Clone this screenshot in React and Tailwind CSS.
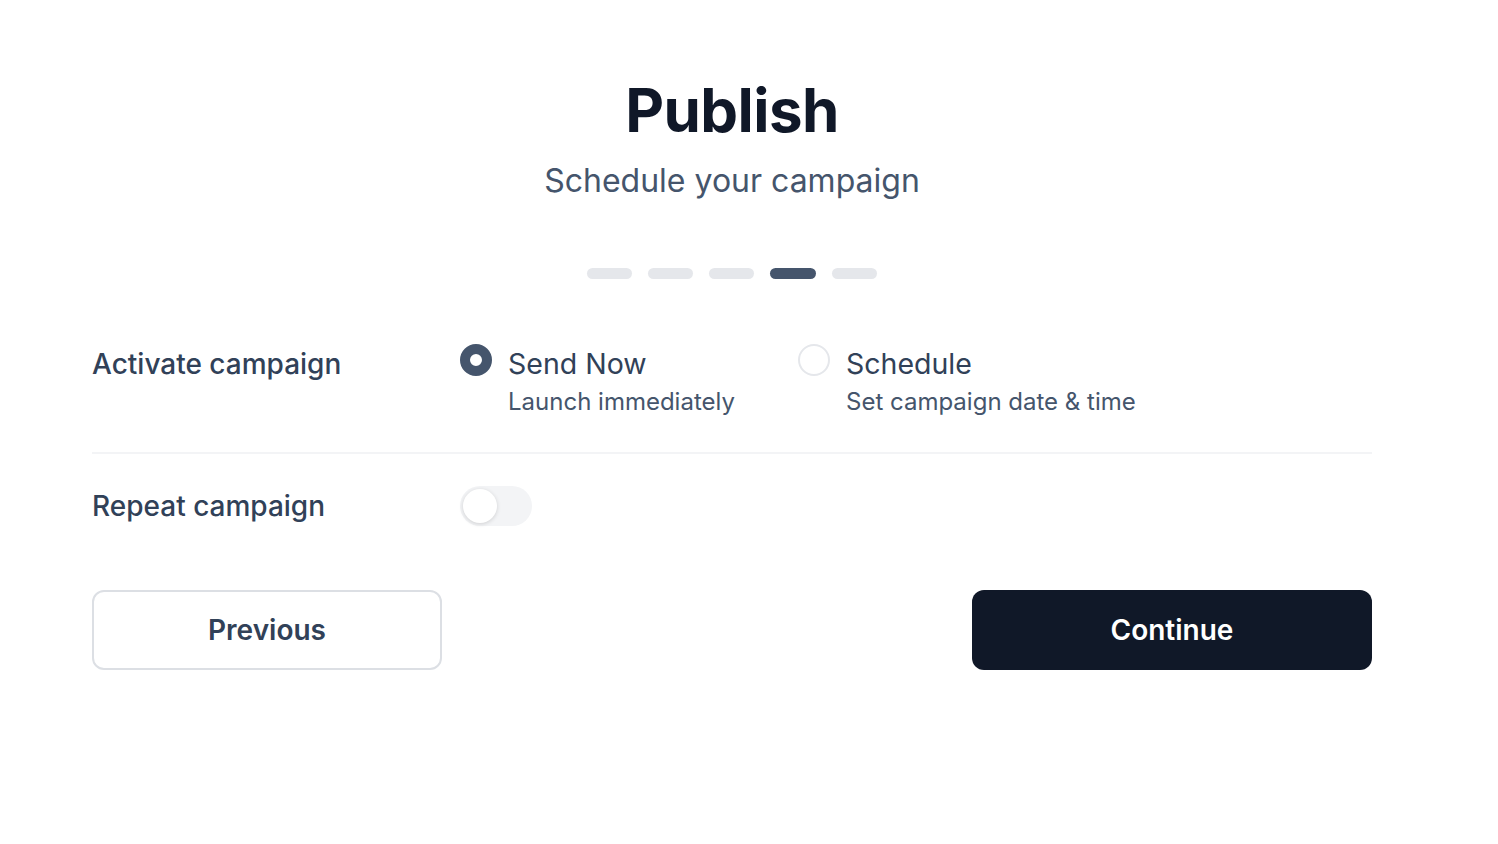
import { useState } from 'react';

function StepBars({ total, current }) {
  return (
    <div className="flex justify-center gap-4">
      {Array.from({ length: total }).map((_, i) => (
        <div
          key={i}
          className={i === current ? 'w-[46px] h-[11px] rounded-full bg-slate-600' : 'w-[45px] h-[11px] rounded-full bg-gray-200'}
        />
      ))}
    </div>
  );
}

function RadioOption({ checked, title, subtitle, onSelect }) {
  return (
    <button type="button" onClick={onSelect} className="flex items-start gap-4 text-left">
      <span
        className={
          checked
            ? 'mt-[-2px] w-8 h-8 rounded-full border-[10px] border-slate-600 bg-white shrink-0'
            : 'mt-[-2px] w-8 h-8 rounded-full border-2 border-gray-200 bg-white shrink-0'
        }
      />
      <span className="flex flex-col">
        <span className="text-[28.5px] leading-[36px] text-slate-700">{title}</span>
        <span className="text-[24px] leading-[32px] text-slate-600 mt-[4px]">{subtitle}</span>
      </span>
    </button>
  );
}

export default function App() {
  const [mode, setMode] = useState('now');
  const [repeat, setRepeat] = useState(false);

  return (
    <div className="min-h-screen bg-white font-['Inter',sans-serif]">
      <div className="w-[1280px] ml-[92px] pt-[76px]">
        {/* Header */}
        <div className="text-center">
          <h1 className="text-[60px] leading-[68px] font-bold text-gray-900 tracking-[-0.01em]">Publish</h1>
          <p className="text-[32px] leading-[40px] text-slate-600 mt-[17px]">Schedule your campaign</p>
        </div>

        <div className="mt-[67px]">
          <StepBars total={5} current={3} />
        </div>

        {/* Activate */}
        <div className="flex items-start mt-[67px] pb-[34px] border-b-2 border-gray-100">
          <div className="w-[368px] text-[28px] leading-[36px] font-medium text-slate-700">Activate campaign</div>
          <div className="w-[338px]">
            <RadioOption
              checked={mode === 'now'}
              title="Send Now"
              subtitle="Launch immediately"
              onSelect={() => setMode('now')}
            />
          </div>
          <RadioOption
            checked={mode === 'schedule'}
            title="Schedule"
            subtitle="Set campaign date & time"
            onSelect={() => setMode('schedule')}
          />
        </div>

        {/* Repeat */}
        <div className="flex items-center mt-[32px]">
          <div className="w-[368px] text-[28px] leading-[36px] font-medium text-slate-700">Repeat campaign</div>
          <button
            type="button"
            onClick={() => setRepeat(!repeat)}
            className={repeat ? 'w-[72px] h-[40px] rounded-full bg-slate-600 p-[3px] flex justify-end' : 'w-[72px] h-[40px] rounded-full bg-gray-100 p-[3px] flex'}
          >
            <span className="w-[34px] h-[34px] rounded-full bg-white shadow-[0_1px_4px_rgba(0,0,0,0.15)]" />
          </button>
        </div>

        {/* Buttons */}
        <div className="flex justify-between mt-[64px]">
          <button type="button" className="w-[350px] h-[80px] rounded-xl border-2 border-[#dcdfe4] bg-white text-[28px] font-semibold text-slate-700">
            Previous
          </button>
          <button type="button" className="w-[400px] h-[80px] rounded-xl bg-gray-900 text-[28px] font-semibold text-white">
            Continue
          </button>
        </div>
      </div>
    </div>
  );
}
